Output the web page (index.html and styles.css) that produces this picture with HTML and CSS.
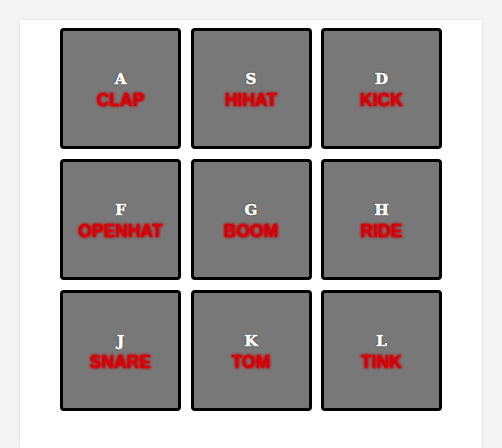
FILE: index.html
```html
<!DOCTYPE html>
<html lang="en">
<head>
  <meta charset="UTF-8" />
  <title>Drum Kit</title>
  <link rel="stylesheet" href="styles.css">
</head>
<body>
<div class="card">
  <div class="keys">
    <div class="key"><kbd>A</kbd><span class="sound">CLAP</span></div>
    <div class="key"><kbd>S</kbd><span class="sound">HIHAT</span></div>
    <div class="key"><kbd>D</kbd><span class="sound">KICK</span></div>
    <div class="key"><kbd>F</kbd><span class="sound">OPENHAT</span></div>
    <div class="key"><kbd>G</kbd><span class="sound">BOOM</span></div>
    <div class="key"><kbd>H</kbd><span class="sound">RIDE</span></div>
    <div class="key"><kbd>J</kbd><span class="sound">SNARE</span></div>
    <div class="key"><kbd>K</kbd><span class="sound">TOM</span></div>
    <div class="key"><kbd>L</kbd><span class="sound">TINK</span></div>
  </div>
</div>
</body>
</html>
```
FILE: styles.css
```css
html, body {
  margin: 0;
  padding: 0;
  background: #f4f4f4;
  height: 100%;
  overflow: hidden;
}

body {
  padding: 20px 20px 0 20px;
  box-sizing: border-box;
}

.card {
  background: #fff;
  height: 100%;
  box-sizing: border-box;
  padding-top: 8px;
  box-shadow: 0 0 2px rgba(0,0,0,0.12);
}

.keys {
  display: grid;
  grid-template-columns: repeat(3, 121px);
  grid-auto-rows: 121px;
  gap: 10px 9.5px;
  justify-content: center;
}

.key {
  box-sizing: border-box;
  border: 3px solid #000;
  border-radius: 4px;
  background: #787878;
  display: flex;
  flex-direction: column;
  align-items: center;
  justify-content: center;
  padding-top: 3px;
}

kbd {
  font-family: "DejaVu Serif", serif;
  font-weight: bold;
  font-size: 15px;
  line-height: 20px;
  color: #fff;
  -webkit-text-stroke: 0.7px #fff;
  text-shadow: 0 0 2px #000, 0 0 1px #000;
}

.sound {
  font-family: "Liberation Sans", Arial, sans-serif;
  font-weight: bold;
  font-size: 17.5px;
  line-height: 23px;
  color: #d8000a;
  text-shadow: 0 0 3px #c00000, 0 0 3px #c00;
}
```
